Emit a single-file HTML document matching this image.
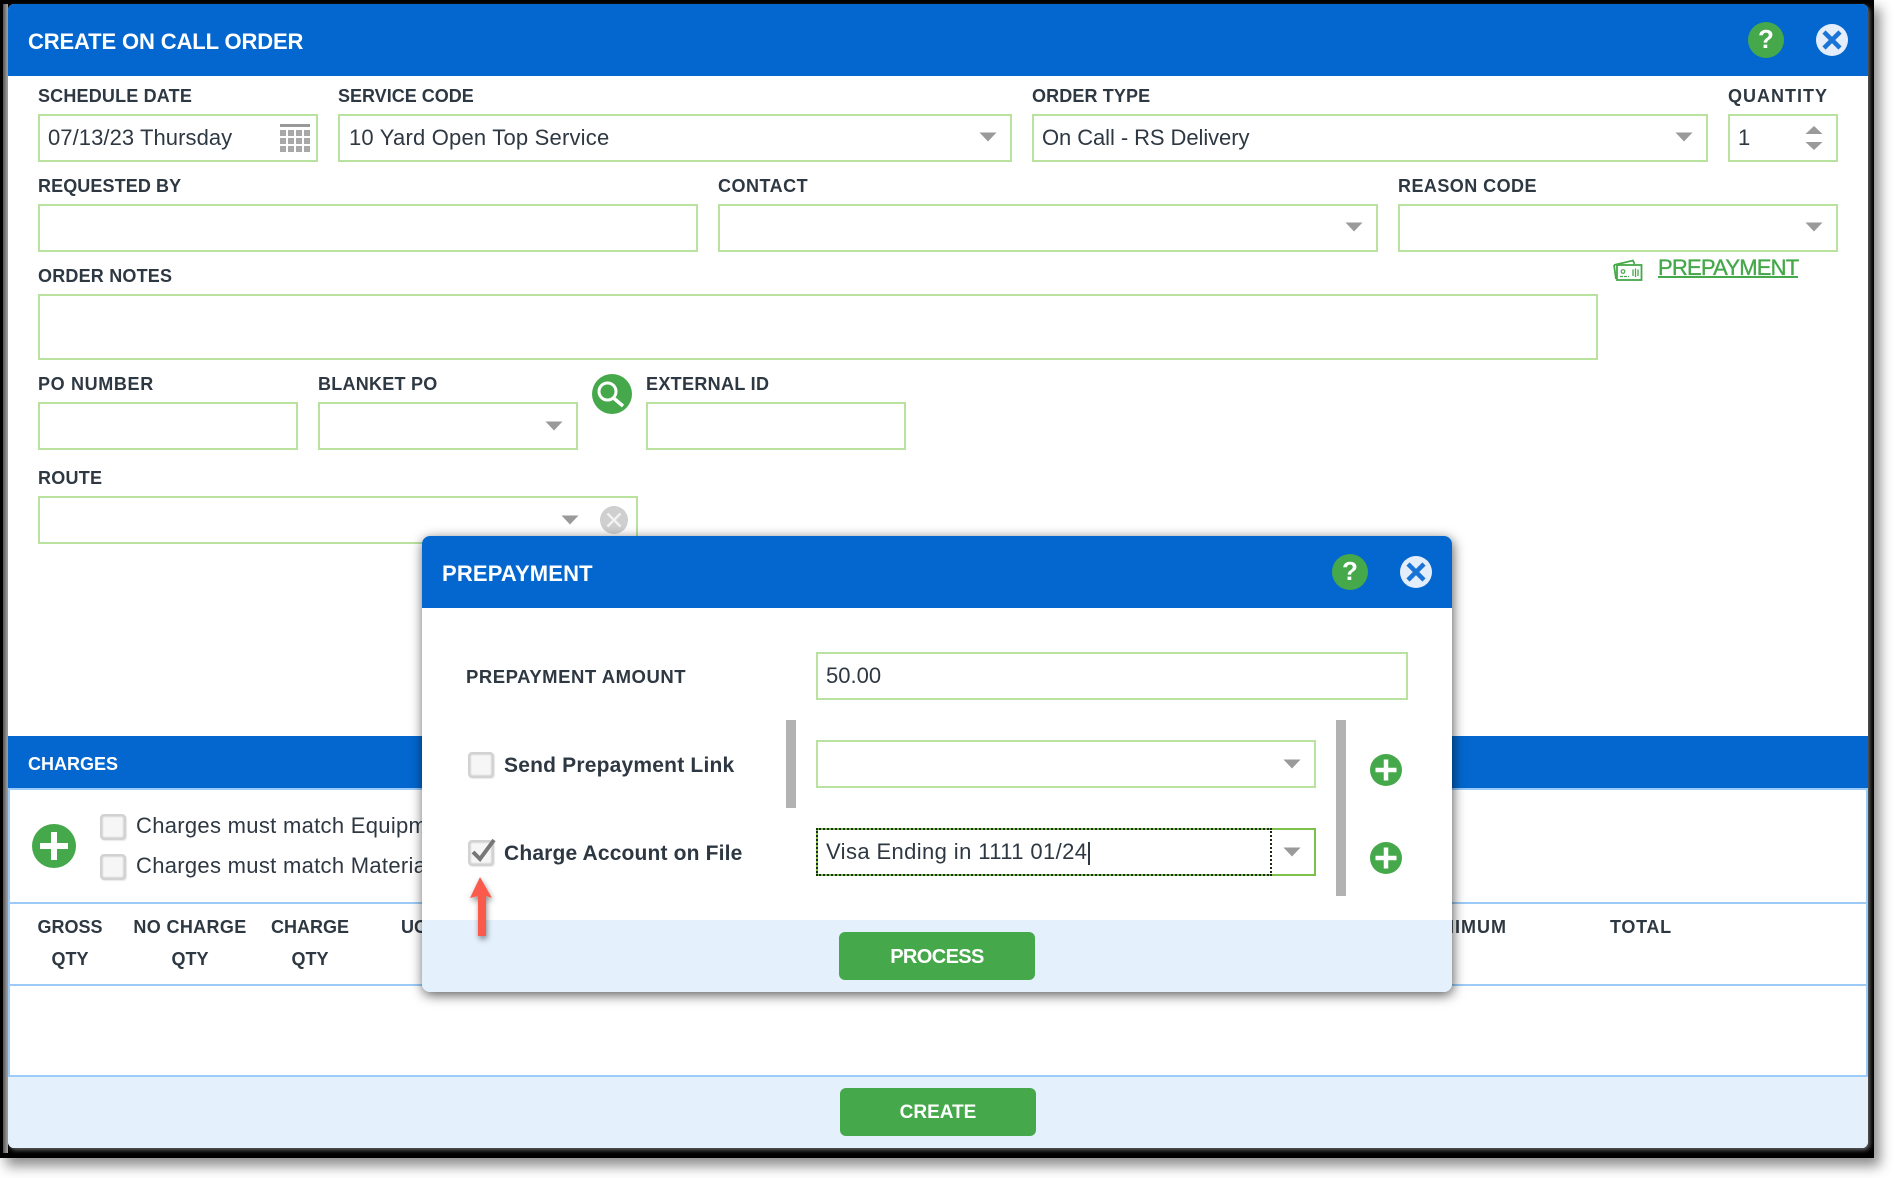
<!DOCTYPE html>
<html><head><meta charset="utf-8"><style>
html,body{margin:0;padding:0;background:#fff}
body{width:1894px;height:1178px;position:relative;overflow:hidden;font-family:"Liberation Sans",sans-serif;color:#2e3842}
.a{position:absolute;box-sizing:border-box}
.t{position:absolute;white-space:nowrap;line-height:30px;height:30px}
.l{font-weight:bold;font-size:18px;letter-spacing:0}
.v{font-size:22px}
.i{position:absolute;box-sizing:border-box;border:2px solid #b9e29f;background:#fff}
.c{text-align:center}
svg{position:absolute;display:block;overflow:visible}
.cb{position:absolute;box-sizing:border-box;width:26px;height:26px;border:2px solid #d2d2d2;border-radius:4px;background:#f6f6f6;box-shadow:inset 0 0 2px #aaa,1px 1px 1px #e8e8e8}
</style></head><body>
<!-- outer frame -->
<div class="a" style="left:0;top:0;width:1874px;height:1158px;background:#000;box-shadow:6px 8px 12px rgba(0,0,0,.45)"></div>
<div class="a" style="left:3px;top:4px;width:5px;height:1149px;background:linear-gradient(90deg,#555,#aaa)"></div>
<div class="a" style="left:8px;top:4px;width:1860px;height:1144px;background:#fff;border-radius:6px;box-shadow:2px 2px 4px #666"></div>
<div class="a" style="left:8px;top:4px;width:1860px;height:72px;background:#0367cf;border-radius:6px 6px 0 0"></div>
<div class="t" style="left:28px;top:27px;font-size:22px;font-weight:bold;color:#fff;letter-spacing:-.13px">CREATE ON CALL ORDER</div>

<svg style="left:0;top:0" width="0" height="0"><defs>
<g id="help"><circle cx="0" cy="0" r="18" fill="#45a84a"/></g>
<g id="close"><circle cx="0" cy="0" r="16" fill="#e3eefa"/><path d="M-8-8L8 8M8-8L-8 8" stroke="#1a74d6" stroke-width="4.5" stroke-linecap="butt"/></g>
<g id="plus"><path d="M-10.500 0H10.500M0-10.500V10.500" stroke="#fff" stroke-width="4.500"/></g>
<polygon id="arr" points="-8.500,-4.500 8.500,-4.500 0,4.500" fill="#9a9a9a"/>
</defs></svg>

<svg style="left:0;top:0" width="1894" height="1178">
<use href="#help" x="1766" y="40"/><use href="#close" x="1832" y="40"/>
</svg>
<div class="t c" style="left:1748px;top:24px;width:36px;font-size:26px;font-weight:bold;color:#fff">?</div>

<!-- row 1 -->
<div class="t l" style="left:38px;top:81px;letter-spacing:.18px">SCHEDULE DATE</div>
<div class="i" style="left:38px;top:114px;width:280px;height:48px"></div>
<div class="t v" style="left:48px;top:123px;letter-spacing:.07px">07/13/23 Thursday</div>
<svg style="left:280px;top:124px" width="30" height="28">
<rect x="0" y="0" width="30" height="3" fill="#999"/>
<g fill="#a8a8a8">
<rect x="0" y="6" width="6" height="6"/><rect x="8" y="6" width="6" height="6"/><rect x="16" y="6" width="6" height="6"/><rect x="24" y="6" width="6" height="6"/>
<rect x="0" y="14" width="6" height="6"/><rect x="8" y="14" width="6" height="6"/><rect x="16" y="14" width="6" height="6"/><rect x="24" y="14" width="6" height="6"/>
<rect x="0" y="22" width="6" height="6"/><rect x="8" y="22" width="6" height="6"/><rect x="16" y="22" width="6" height="6"/><rect x="24" y="22" width="6" height="6"/>
</g></svg>

<div class="t l" style="left:338px;top:81px">SERVICE CODE</div>
<div class="i" style="left:338px;top:114px;width:674px;height:48px"></div>
<div class="t v" style="left:349px;top:123px;letter-spacing:.2px">10 Yard Open Top Service</div>

<div class="t l" style="left:1032px;top:81px;letter-spacing:.12px">ORDER TYPE</div>
<div class="i" style="left:1032px;top:114px;width:676px;height:48px"></div>
<div class="t v" style="left:1042px;top:123px;letter-spacing:-.08px">On Call - RS Delivery</div>

<div class="t l" style="left:1728px;top:81px;letter-spacing:1px">QUANTITY</div>
<div class="i" style="left:1728px;top:114px;width:110px;height:48px"></div>
<div class="t v" style="left:1738px;top:123px">1</div>

<!-- row 2 -->
<div class="t l" style="left:38px;top:171px;letter-spacing:.1px">REQUESTED BY</div>
<div class="i" style="left:38px;top:204px;width:660px;height:48px"></div>
<div class="t l" style="left:718px;top:171px;letter-spacing:.5px">CONTACT</div>
<div class="i" style="left:718px;top:204px;width:660px;height:48px"></div>
<div class="t l" style="left:1398px;top:171px;letter-spacing:.45px">REASON CODE</div>
<div class="i" style="left:1398px;top:204px;width:440px;height:48px"></div>

<!-- notes -->
<div class="t l" style="left:38px;top:261px;letter-spacing:.2px">ORDER NOTES</div>
<div class="i" style="left:38px;top:294px;width:1560px;height:66px"></div>
<div class="t" style="left:1658px;top:253px;font-size:22px;line-height:30px;color:#45a84a;letter-spacing:-.79px;-webkit-text-stroke:.35px #45a84a">PREPAYMENT</div>
<div class="a" style="left:1658px;top:276px;width:140px;height:1.500px;background:#45a84a"></div>
<svg style="left:1613px;top:259px" width="30" height="22" fill="none" stroke="#45a84a" stroke-width="1.800">
<path d="M1 6L20 1.500L21.500 5"/><path d="M1 6L3 20"/>
<rect x="4" y="6" width="24.500" height="15" fill="#fff"/>
<circle cx="10" cy="12.500" r="1.800" stroke-width="1.200"/>
<path d="M7 17.500H16" stroke-width="1.200" stroke-dasharray="3 1"/>
<path d="M20 10.500V17M22.500 9.500V18M25 10.500V17" stroke-width="1.300"/>
</svg>

<!-- row 4 -->
<div class="t l" style="left:38px;top:369px;letter-spacing:.65px">PO NUMBER</div>
<div class="i" style="left:38px;top:402px;width:260px;height:48px"></div>
<div class="t l" style="left:318px;top:369px;letter-spacing:.25px">BLANKET PO</div>
<div class="i" style="left:318px;top:402px;width:260px;height:48px"></div>
<svg style="left:592px;top:374px" width="40" height="40">
<circle cx="20" cy="20" r="20" fill="#45a84a"/>
<circle cx="15.500" cy="17.500" r="8.500" fill="none" stroke="#fff" stroke-width="3"/>
<path d="M21.500 24L31 32" stroke="#fff" stroke-width="3.500"/>
</svg>
<div class="t l" style="left:646px;top:369px;letter-spacing:.33px">EXTERNAL ID</div>
<div class="i" style="left:646px;top:402px;width:260px;height:48px"></div>

<!-- route -->
<div class="t l" style="left:38px;top:463px;letter-spacing:.25px">ROUTE</div>
<div class="i" style="left:38px;top:496px;width:600px;height:48px"></div>
<svg style="left:600px;top:506px" width="28" height="28">
<circle cx="14" cy="14" r="14" fill="#cfcfcf"/>
<path d="M7.500 7.500L20.500 20.500M20.500 7.500L7.500 20.500" stroke="#f2f2f2" stroke-width="2.500"/>
</svg>

<svg style="left:0;top:0" width="1894" height="1178">
<use href="#arr" x="988" y="137"/><use href="#arr" x="1684" y="137"/>
<use href="#arr" x="1354" y="227"/><use href="#arr" x="1814" y="227"/>
<use href="#arr" x="554" y="426"/><use href="#arr" x="570" y="520"/>
<polygon points="1814,126 1822.500,134 1805.500,134" fill="#9a9a9a"/>
<polygon points="1805.500,142 1822.500,142 1814,150" fill="#9a9a9a"/>
</svg>

<!-- charges -->
<div class="a" style="left:8px;top:736px;width:1860px;height:52px;background:#0367cf"></div>
<div class="a" style="left:8px;top:788px;width:1860px;height:2px;background:#9ccbf8"></div>
<div class="a" style="left:8px;top:790px;width:2px;height:287px;background:#9ccbf8"></div>
<div class="a" style="left:1866px;top:790px;width:2px;height:287px;background:#9ccbf8"></div>
<div class="t l" style="left:28px;top:749px;color:#fff">CHARGES</div>
<svg style="left:32px;top:824px" width="44" height="44">
<circle cx="22" cy="22" r="22" fill="#45a84a"/>
<path d="M8 22H36M22 8V36" stroke="#fff" stroke-width="6"/>
</svg>
<div class="cb" style="left:100px;top:814px"></div>
<div class="cb" style="left:100px;top:854px"></div>
<div class="t v" style="left:136px;top:811px;letter-spacing:.3px">Charges must match Equipment</div>
<div class="t v" style="left:136px;top:851px;letter-spacing:.3px">Charges must match Material</div>
<div class="a" style="left:8px;top:902px;width:1860px;height:2px;background:#9ccbf8"></div>
<div class="a" style="left:8px;top:984px;width:1860px;height:2px;background:#9ccbf8"></div>
<div class="t l c" style="left:30px;top:912px;width:80px">GROSS</div>
<div class="t l c" style="left:30px;top:944px;width:80px">QTY</div>
<div class="t l c" style="left:120px;top:912px;width:140px;letter-spacing:.35px">NO CHARGE</div>
<div class="t l c" style="left:120px;top:944px;width:140px">QTY</div>
<div class="t l c" style="left:250px;top:912px;width:120px">CHARGE</div>
<div class="t l c" style="left:250px;top:944px;width:120px">QTY</div>
<div class="t l" style="left:401px;top:912px">UOM</div>
<div class="t l" style="left:1419px;top:912px;letter-spacing:1px">MINIMUM</div>
<div class="t l" style="left:1610px;top:912px;letter-spacing:.7px">TOTAL</div>

<!-- footer -->
<div class="a" style="left:8px;top:1075px;width:1860px;height:2px;background:#9ccbf8"></div>
<div class="a" style="left:8px;top:1077px;width:1860px;height:71px;background:#e4f0fc;border-radius:0 0 6px 6px"></div>
<div class="a" style="left:840px;top:1088px;width:196px;height:48px;background:#45a84a;border-radius:6px"></div>
<div class="t c" style="left:840px;top:1098px;width:196px;color:#fff;font-size:19px;font-weight:bold">CREATE</div>

<!-- dialog -->
<div class="a" style="left:422px;top:536px;width:1030px;height:456px;background:#fff;border-radius:8px;box-shadow:1px 3px 12px rgba(0,0,0,.65)"></div>
<div class="a" style="left:422px;top:536px;width:1030px;height:72px;background:#0367cf;border-radius:8px 8px 0 0"></div>
<div class="a" style="left:422px;top:920px;width:1030px;height:72px;background:#e4f0fc;border-radius:0 0 8px 8px"></div>
<div class="t" style="left:442px;top:559px;font-size:22px;font-weight:bold;color:#fff;letter-spacing:.16px">PREPAYMENT</div>
<svg style="left:0;top:0" width="1894" height="1178">
<use href="#help" x="1350" y="572"/><use href="#close" x="1416" y="572"/>
</svg>
<div class="t c" style="left:1332px;top:556px;width:36px;font-size:26px;font-weight:bold;color:#fff">?</div>

<div class="t" style="left:466px;top:662px;font-size:18.500px;font-weight:bold;letter-spacing:.53px">PREPAYMENT AMOUNT</div>
<div class="i" style="left:816px;top:652px;width:592px;height:48px"></div>
<div class="t v" style="left:826px;top:661px">50.00</div>

<div class="a" style="left:786px;top:720px;width:10px;height:88px;background:#b2b2b2"></div>
<div class="a" style="left:1336px;top:720px;width:10px;height:176px;background:#b2b2b2"></div>

<div class="cb" style="left:468px;top:752px"></div>
<div class="t" style="left:504px;top:751px;font-size:21px;font-weight:bold;letter-spacing:.2px">Send Prepayment Link</div>
<div class="cb" style="left:468px;top:840px"></div>
<svg style="left:468px;top:836px" width="30" height="30">
<path d="M5 16L12 23L26 4" fill="none" stroke="#777" stroke-width="4"/>
</svg>
<div class="t" style="left:504px;top:839px;font-size:21px;font-weight:bold;letter-spacing:.16px">Charge Account on File</div>

<div class="i" style="left:816px;top:740px;width:500px;height:48px"></div>
<div class="i" style="left:816px;top:828px;width:500px;height:48px;border-color:#7cc24a"></div>
<div class="a" style="left:816px;top:828px;width:456px;height:48px;border:2px dotted #1b2b14"></div>
<div class="t v" style="left:826px;top:837px;letter-spacing:.39px">Visa Ending in 1111 01/24</div>
<div class="a" style="left:1088px;top:842px;width:2px;height:23px;background:#2e3842"></div>

<svg style="left:0;top:0" width="1894" height="1178">
<use href="#arr" x="1292" y="764"/><use href="#arr" x="1292" y="852"/>
<circle cx="1386" cy="770" r="16" fill="#45a84a"/><use href="#plus" x="1386" y="770"/>
<circle cx="1386" cy="858" r="16" fill="#45a84a"/><use href="#plus" x="1386" y="858"/>
</svg>

<div class="a" style="left:839px;top:932px;width:196px;height:48px;background:#45a84a;border-radius:6px"></div>
<div class="t c" style="left:839px;top:942px;width:196px;color:#fff;font-size:20px;font-weight:bold;letter-spacing:-.6px">PROCESS</div>

<!-- red arrow -->
<svg style="left:460px;top:870px" width="44" height="80">
<defs><filter id="s" x="-50%" y="-20%" width="200%" height="150%"><feDropShadow dx="1" dy="3" stdDeviation="3" flood-color="#000" flood-opacity=".45"/></filter></defs>
<polygon filter="url(#s)" points="20,7 32,28 26,26 26,66 18,66 18,26 10,28" fill="#fa5a4c"/>
</svg>
</body></html>
